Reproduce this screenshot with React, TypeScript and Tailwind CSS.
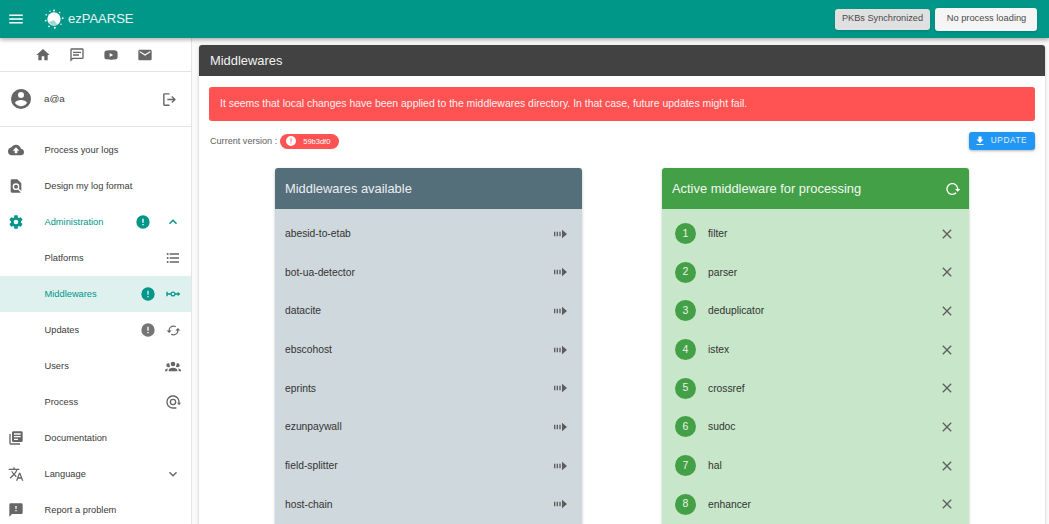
const P: Record<string, string> = {
  menu: "M3,6H21V8H3V6M3,11H21V13H3V11M3,16H21V18H3V16Z",
  home: "M10,20V14H14V20H19V12H22L12,3L2,12H5V20H10Z",
  msg: "M20,2H4A2,2 0 0,0 2,4V22L6,18H20A2,2 0 0,0 22,16V4C22,2.89 21.1,2 20,2M20,16H5.17L4,17.17V4H20V16M6,7H18V9H6V7M6,11H15V13H6V11Z",
  yt: "M10,15L15.19,12L10,9V15M21.56,7.17C21.69,7.64 21.78,8.27 21.84,9.07C21.91,9.87 21.94,10.56 21.94,11.16L22,12C22,14.19 21.84,15.8 21.56,16.83C21.31,17.73 20.73,18.31 19.83,18.56C19.36,18.69 18.5,18.78 17.18,18.84C15.88,18.91 14.69,18.94 13.59,18.94L12,19C7.81,19 5.2,18.84 4.17,18.56C3.27,18.31 2.69,17.73 2.44,16.83C2.31,16.36 2.22,15.73 2.16,14.93C2.09,14.13 2.06,13.44 2.06,12.84L2,12C2,9.81 2.16,8.2 2.44,7.17C2.69,6.27 3.27,5.69 4.17,5.44C4.64,5.31 5.5,5.22 6.82,5.16C8.12,5.09 9.31,5.06 10.41,5.06L12,5C16.19,5 18.8,5.16 19.83,5.44C20.73,5.69 21.31,6.27 21.56,7.17Z",
  email: "M20,8L12,13L4,8V6L12,11L20,6M20,4H4C2.89,4 2,4.89 2,6V18A2,2 0 0,0 4,20H20A2,2 0 0,0 22,18V6C22,4.89 21.1,4 20,4Z",
  account: "M12,19.2C9.5,19.2 7.29,17.92 6,16C6.03,14 10,12.9 12,12.9C14,12.9 17.97,14 18,16C16.71,17.92 14.5,19.2 12,19.2M12,5A3,3 0 0,1 15,8A3,3 0 0,1 12,11A3,3 0 0,1 9,8A3,3 0 0,1 12,5M12,2A10,10 0 0,0 2,12A10,10 0 0,0 12,22A10,10 0 0,0 22,12C22,6.47 17.5,2 12,2Z",
  logout: "M5,3H12V5H5V19H12V21H5A2,2 0 0,1 3,19V5A2,2 0 0,1 5,3M16,7L21,12L16,17L14.6,15.6L17.2,13H9V11H17.2L14.6,8.4Z",
  cloud: "M14,13V17H10V13H7L12,8L17,13M19.35,10.03C18.67,6.59 15.64,4 12,4C9.11,4 6.6,5.64 5.35,8.03C2.34,8.36 0,10.9 0,14A6,6 0 0,0 6,20H19A5,5 0 0,0 24,15C24,12.36 21.95,10.22 19.35,10.03Z",
  file: "M9,13A3,3 0 0,0 12,16A3,3 0 0,0 15,13A3,3 0 0,0 12,10A3,3 0 0,0 9,13M20,19.59V8L14,2H6A2,2 0 0,0 4,4V20A2,2 0 0,0 6,22H18C18.45,22 18.85,21.85 19.19,21.6L14.76,17.17C13.96,17.69 13,18 12,18A5,5 0 0,1 7,13A5,5 0 0,1 12,8A5,5 0 0,1 17,13C17,14 16.69,14.96 16.17,15.75L20,19.59Z",
  cog: "M12,15.5A3.5,3.5 0 0,1 8.5,12A3.5,3.5 0 0,1 12,8.5A3.5,3.5 0 0,1 15.5,12A3.5,3.5 0 0,1 12,15.5M19.43,12.97C19.47,12.65 19.5,12.33 19.5,12C19.5,11.67 19.47,11.34 19.43,11L21.54,9.37C21.73,9.22 21.78,8.95 21.66,8.73L19.66,5.27C19.54,5.05 19.27,4.96 19.05,5.05L16.56,6.05C16.04,5.66 15.5,5.32 14.87,5.07L14.5,2.42C14.46,2.18 14.25,2 14,2H10C9.75,2 9.54,2.18 9.5,2.42L9.13,5.07C8.5,5.32 7.96,5.66 7.44,6.05L4.95,5.05C4.73,4.96 4.46,5.05 4.34,5.27L2.34,8.73C2.21,8.95 2.27,9.22 2.46,9.37L4.57,11C4.53,11.34 4.5,11.67 4.5,12C4.5,12.33 4.53,12.65 4.57,12.97L2.46,14.63C2.27,14.78 2.21,15.05 2.34,15.27L4.34,18.73C4.46,18.95 4.73,19.03 4.95,18.95L7.44,17.94C7.96,18.34 8.5,18.68 9.13,18.93L9.5,21.58C9.54,21.82 9.75,22 10,22H14C14.25,22 14.46,21.82 14.5,21.58L14.87,18.93C15.5,18.67 16.04,18.34 16.56,17.94L19.05,18.95C19.27,19.03 19.54,18.95 19.66,18.73L21.66,15.27C21.78,15.05 21.73,14.78 21.54,14.63L19.43,12.97Z",
  alert: "M13,13H11V7H13M13,17H11V15H13M12,2A10,10 0 0,0 2,12A10,10 0 0,0 12,22A10,10 0 0,0 22,12A10,10 0 0,0 12,2Z",
  up: "M7.41,15.41L12,10.83L16.59,15.41L18,14L12,8L6,14L7.41,15.41Z",
  down: "M7.41,8.58L12,13.17L16.59,8.58L18,10L12,16L6,10L7.41,8.58Z",
  list: "M7,5H21V7H7V5M7,13V11H21V13H7M4,4.5A1.5,1.5 0 0,1 5.5,6A1.5,1.5 0 0,1 4,7.5A1.5,1.5 0 0,1 2.5,6A1.5,1.5 0 0,1 4,4.5M4,10.5A1.5,1.5 0 0,1 5.5,12A1.5,1.5 0 0,1 4,13.5A1.5,1.5 0 0,1 2.5,12A1.5,1.5 0 0,1 4,10.5M7,19V17H21V19H7M4,16.5A1.5,1.5 0 0,1 5.5,18A1.5,1.5 0 0,1 4,19.5A1.5,1.5 0 0,1 2.5,18A1.5,1.5 0 0,1 4,16.5Z",
  mw: "M2,8.5H4V11H8.2A4,4 0 0,1 15.8,11H19V8.5L23,12L19,15.5V13H15.8A4,4 0 0,1 8.2,13H4V15.5H2V8.5M12,10A2,2 0 0,0 10,12A2,2 0 0,0 12,14A2,2 0 0,0 14,12A2,2 0 0,0 12,10Z",
  cached: "M19,8L15,12H18A6,6 0 0,1 12,18C11,18 10.03,17.75 9.2,17.3L7.74,18.76C8.97,19.54 10.43,20 12,20A8,8 0 0,0 20,12H23M6,12A6,6 0 0,1 12,6C13,6 13.97,6.25 14.8,6.7L16.26,5.24C15.03,4.46 13.57,4 12,4A8,8 0 0,0 4,12H1L5,16L9,12",
  group: "M12,5.5A3.5,3.5 0 0,1 15.5,9A3.5,3.5 0 0,1 12,12.5A3.5,3.5 0 0,1 8.5,9A3.5,3.5 0 0,1 12,5.5M5,8C5.56,8 6.08,8.15 6.53,8.42C6.38,9.85 6.8,11.27 7.66,12.38C7.16,13.34 6.16,14 5,14A3,3 0 0,1 2,11A3,3 0 0,1 5,8M19,8A3,3 0 0,1 22,11A3,3 0 0,1 19,14C17.84,14 16.84,13.34 16.34,12.38C17.2,11.27 17.62,9.85 17.47,8.42C17.92,8.15 18.44,8 19,8M5.5,18.25C5.5,16.18 8.41,14.5 12,14.5C15.59,14.5 18.5,16.18 18.5,18.25V20H5.5V18.25M0,20V18.5C0,17.11 1.89,15.94 4.45,15.6C3.86,16.28 3.5,17.22 3.5,18.25V20H0M24,20H20.5V18.25C20.5,17.22 20.14,16.28 19.55,15.6C22.11,15.94 24,17.11 24,18.5V20Z",
  at: "M12,2C14.75,2 17.1,3 19.05,4.95C21,6.9 22,9.25 22,12V13H24L21,17L18,13H20V12C20,9.81 19.23,7.93 17.65,6.35C16.07,4.77 14.19,4 12,4C9.81,4 7.93,4.77 6.35,6.35C4.77,7.93 4,9.81 4,12C4,14.19 4.77,16.07 6.35,17.65C7.93,19.23 9.81,20 12,20H17V22H12C9.25,22 6.9,21 4.95,19.05C3,17.1 2,14.75 2,12C2,9.25 3,6.9 4.95,4.95C6.9,3 9.25,2 12,2M12,7A5,5 0 0,1 17,12A5,5 0 0,1 12,17A5,5 0 0,1 7,12A5,5 0 0,1 12,7M12,9A3,3 0 0,0 9,12A3,3 0 0,0 12,15A3,3 0 0,0 15,12A3,3 0 0,0 12,9Z",
  books: "M19,11H9V9H19M15,15H9V13H15M19,7H9V5H19M20,2H8A2,2 0 0,0 6,4V16A2,2 0 0,0 8,18H20A2,2 0 0,0 22,16V4C22,2.89 21.1,2 20,2M4,6H2V20A2,2 0 0,0 4,22H18V20H4V6Z",
  translate: "M12.87,15.07L10.33,12.56L10.36,12.53C12.1,10.59 13.34,8.36 14.07,6H17V4H10V2H8V4H1V6H12.17C11.5,7.92 10.44,9.75 9,11.35C8.07,10.32 7.3,9.19 6.69,8H4.69C5.42,9.63 6.42,11.17 7.67,12.56L2.58,17.58L4,19L9,14L12.11,17.11L12.87,15.07M18.5,10H16.5L12,22H14L15.12,19H19.87L21,22H23L18.5,10M15.88,17L17.5,12.67L19.12,17H15.88Z",
  report: "M13,10H11V6H13M13,14H11V12H13M20,2H4A2,2 0 0,0 2,4V22L6,18H20A2,2 0 0,0 22,16V4C22,2.89 21.1,2 20,2Z",
  close: "M19,6.41L17.59,5L12,10.59L6.41,5L5,6.41L10.59,12L5,17.59L6.41,19L12,13.41L17.59,19L19,17.59L13.41,12L19,6.41Z",
  download: "M5,20H19V18H5M19,9H15V3H9V9H5L12,16L19,9Z",
  reload: "M2 12C2 16.97 6.03 21 11 21C13.39 21 15.68 20.06 17.4 18.4L15.9 16.9C14.63 18.25 12.86 19 11 19C4.76 19 1.64 11.46 6.05 7.05C10.46 2.64 18 5.77 18 12H15L19 16H19.1L23 12H20C20 7.03 15.97 3 11 3C6.03 3 2 7.03 2 12Z",
  transfer: "M1.5,8.5H3.5V15.5H1.5V8.5M5.5,8.5H7.5V15.5H5.5V8.5M9.5,8.5H11.5V15.5H9.5V8.5M13.5,5.5L21,12L13.5,18.5V5.5Z",
};

function I({ n, c = "", fill = "currentColor" }: { n: string; c?: string; fill?: string }) {
  return (
    <svg viewBox="0 0 24 24" className={"shrink-0 " + c} fill={fill} aria-hidden="true">
      <path d={P[n]} />
    </svg>
  );
}

function Logo() {
  const dots = [
    [12, 1.8, 1.2], [18.8, 4.2, 1], [22.4, 11, 1.1], [20.4, 18.4, 0.9], [13, 22.4, 1.2], [6, 20.8, 1.1], [2, 14, 1.1], [2.6, 7, 1], [7.2, 2.6, 0.9],
  ];
  return (
    <svg viewBox="0 0 24 24" className="w-[20px] h-[20px] shrink-0" aria-hidden="true">
      <circle cx="12" cy="12" r="8" fill="#ffffff" />
      <path d="M5.5 15.5a8 8 0 0 0 10.5 3l-4-5z" fill="#9fd9cf" />
      {dots.map((d, i) => (
        <circle key={i} cx={d[0]} cy={d[1]} r={d[2]} fill="#e8f7f4" />
      ))}
    </svg>
  );
}

type Row = { label: string; icon?: string; sub?: boolean; active?: boolean; alert?: string; trail?: string };

const nav: Row[] = [
  { label: "Process your logs", icon: "cloud" },
  { label: "Design my log format", icon: "file" },
  { label: "Administration", icon: "cog", active: true, alert: "green", trail: "up" },
  { label: "Platforms", sub: true, trail: "list" },
  { label: "Middlewares", sub: true, active: true, alert: "green", trail: "mw" },
  { label: "Updates", sub: true, alert: "gray", trail: "cached" },
  { label: "Users", sub: true, trail: "group" },
  { label: "Process", sub: true, trail: "at" },
  { label: "Documentation", icon: "books" },
  { label: "Language", icon: "translate", trail: "down" },
  { label: "Report a problem", icon: "report" },
];

function NavRow({ r }: { r: Row }) {
  const selected = r.sub && r.active;
  const tone = r.active ? "text-[#009688]" : "text-[#666666]";
  return (
    <div className={"h-9 shrink-0 flex items-center pl-[8px] " + (selected ? "bg-[#dff1ef]" : "")}>
      <div className="w-[36.5px] shrink-0 flex items-center">
        {r.icon && <I n={r.icon} c={"w-[16px] h-[16px] " + (r.active ? "text-[#009688]" : "text-[#666666]")} />}
      </div>
      <span className={"flex-1 pt-[2px] text-[9.3px] whitespace-nowrap " + (r.active ? "text-[#009688]" : "text-[#3a3a3a]")}>{r.label}</span>
      {r.alert && (
        <I
          n="alert"
          c={
            "w-[16px] h-[16px] " +
            (r.sub ? "mr-0 " : "mr-[5.5px] ") +
            (r.alert === "green" ? "text-[#009688]" : "text-[#757575]")
          }
        />
      )}
      {r.trail && (
        <div className="w-[35px] shrink-0 flex justify-center pr-[1px]">
          <I n={r.trail} c={(r.trail === "cached" ? "w-[15px] h-[15px] " : "w-[16px] h-[16px] ") + tone} />
        </div>
      )}
    </div>
  );
}

const available = ["abesid-to-etab", "bot-ua-detector", "datacite", "ebscohost", "eprints", "ezunpaywall", "field-splitter", "host-chain"];
const activeList = ["filter", "parser", "deduplicator", "istex", "crossref", "sudoc", "hal", "enhancer"];

export default function App() {
  return (
    <div className="h-[524px] w-[1049px] overflow-hidden flex flex-col bg-[#fafafa] font-['Liberation_Sans',Arial,sans-serif] text-[#424242]">
      <header className="relative z-10 h-[38px] shrink-0 bg-[#009688] flex items-center shadow-[0_2px_4px_rgba(0,0,0,0.3)]">
        <I n="menu" c="w-[18px] h-[18px] text-white ml-[7px]" />
        <div className="ml-[19px] flex items-center gap-[3px]">
          <Logo />
          <span className="text-[13px] text-[#e6f5f3] ml-[1px]">ezPAARSE</span>
        </div>
        <div className="ml-auto flex items-center gap-[5px] pr-[12px]">
          <div className="h-[21px] w-[95px] rounded-[3px] bg-[#e0e0e0] flex items-center justify-center text-[9.2px] text-[#4a4a4a] shadow-sm">PKBs Synchronized</div>
          <div className="h-[23px] w-[102px] rounded-[3px] bg-[#f5f5f5] flex items-center justify-center pl-[1px] text-[9.3px] text-[#4a4a4a] shadow-sm">No process loading</div>
        </div>
      </header>

      <div className="flex-1 min-h-0 flex">
        <aside className="w-[192px] shrink-0 bg-white border-r border-[#e4e4e4] flex flex-col overflow-hidden">
          <div className="h-[34px] shrink-0 border-b border-[#e4e4e4] flex items-center justify-center gap-[18px] pr-[3px] text-[#666666]">
            <I n="home" c="w-[16px] h-[16px]" />
            <I n="msg" c="w-[16px] h-[16px]" />
            <I n="yt" c="w-[16px] h-[16px]" />
            <I n="email" c="w-[16px] h-[16px]" />
          </div>
          <div className="h-[55px] shrink-0 border-b border-[#e4e4e4] flex items-center pl-[9px] pr-[13px]">
            <I n="account" c="w-[24px] h-[24px] text-[#666666]" />
            <span className="ml-[11px] text-[9.75px] font-medium text-[#424242] flex-1">a@a</span>
            <I n="logout" c="w-[17px] h-[17px] text-[#666666]" />
          </div>
          <nav className="pt-[5px] flex flex-col">
            {nav.map((r) => (
              <NavRow key={r.label} r={r} />
            ))}
          </nav>
        </aside>

        <main className="flex-1 min-w-0 pt-[7px] pl-[7px] pr-[4px] overflow-hidden">
          <section className="bg-white rounded-t-[3px] shadow-[0_1px_3px_rgba(0,0,0,0.25)] min-h-[480px]">
            <div className="h-[31px] bg-[#424242] rounded-t-[3px] flex items-center px-[11px] pt-[1px] text-[12.9px] text-[#f2f2f2]">
              Middlewares
            </div>
            <div className="px-[10px] pt-[11px]">
              <div className="h-[34px] rounded-[3px] bg-[#ff5252] flex items-center px-[11px] text-[10.45px] text-[#fff0f0]">
                It seems that local changes have been applied to the middlewares directory. In that case, future updates might fail.
              </div>
              <div className="mt-[11px] h-[18px] flex items-center">
                <span className="pt-[1px] text-[9.1px] text-[#616161] ml-[1px]">Current version :</span>
                <span className="ml-[3px] h-[15px] w-[59px] rounded-full bg-[#ff5252] flex items-center pl-[5px] text-white">
                  <I n="alert" c="w-[12px] h-[12px]" />
                  <span className="ml-[6px] pt-[1px] text-[7.5px]">59b3df0</span>
                </span>
                <div className="ml-auto h-[18px] w-[66px] rounded-[3px] bg-[#2196f3] flex items-center justify-center gap-[5px] pr-[3px] shadow-[0_1px_3px_rgba(0,0,0,0.3)] text-[#e3f2fd]">
                  <I n="download" c="w-[12px] h-[12px] text-white" />
                  <span className="pt-[1px] text-[8.25px] tracking-[0.6px]">UPDATE</span>
                </div>
              </div>
              <div className="mt-[18px] flex justify-center gap-[80px]">
                <div className="w-[307px] rounded-t-[3px] shadow-[0_1px_3px_rgba(0,0,0,0.25)] overflow-hidden">
                  <div className="h-[41px] bg-[#546e7a] flex items-center px-[10px] text-[12.9px] text-[#eceff1]">Middlewares available</div>
                  <div className="bg-[#cfd8dc] pt-[5.3px] pb-[40px]">
                    {available.map((m) => (
                      <div key={m} className="h-[38.67px] flex items-center pl-[10px] pr-[13px]">
                        <span className="flex-1 text-[10.3px] text-[#333333]">{m}</span>
                        <I n="transfer" c="w-[16px] h-[16px] text-[#5c5c5c]" />
                      </div>
                    ))}
                  </div>
                </div>
                <div className="w-[307px] rounded-t-[3px] shadow-[0_1px_3px_rgba(0,0,0,0.25)] overflow-hidden">
                  <div className="h-[41px] bg-[#43a047] flex items-center pl-[10px] pr-[8px] text-[12.9px] text-[#f1f8f1]">
                    <span className="flex-1">Active middleware for processing</span>
                    <I n="reload" c="w-[16px] h-[16px] text-white" />
                  </div>
                  <div className="bg-[#c8e6c9] pt-[5.3px] pb-[40px]">
                    {activeList.map((m, i) => (
                      <div key={m} className="h-[38.67px] flex items-center pl-[13px] pr-[14px]">
                        <span className="w-[21px] h-[21px] rounded-full bg-[#43a047] flex items-center justify-center text-[10.5px] text-[#e8f5e9] shrink-0">{i + 1}</span>
                        <span className="ml-[12px] flex-1 text-[10.3px] text-[#333333]">{m}</span>
                        <I n="close" c="w-[16px] h-[16px] text-[#5f5f5f]" />
                      </div>
                    ))}
                  </div>
                </div>
              </div>
            </div>
          </section>
        </main>
      </div>
    </div>
  );
}
